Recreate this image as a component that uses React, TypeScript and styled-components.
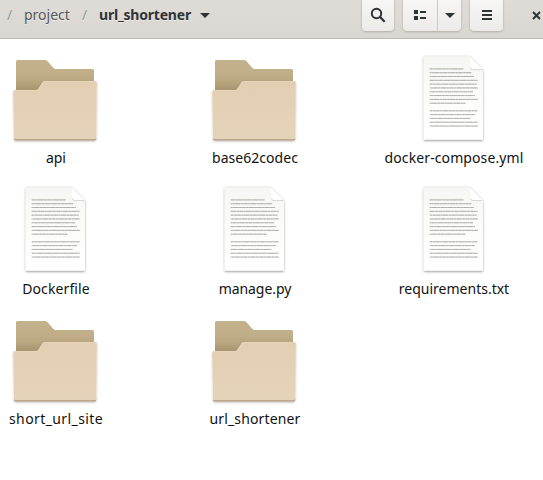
import React from "react";
import styled, { createGlobalStyle } from "styled-components";

const GlobalStyle = createGlobalStyle`
  * { box-sizing: border-box; }
  body {
    margin: 0;
    overflow: hidden;
    background: #fff;
    font-family: "Noto Sans", "Open Sans", sans-serif;
    font-size: 14px;
  }
`;

const Window = styled.main`
  width: 543px;
  height: 480px;
  overflow: hidden;
  background: #fff;
`;

const HeaderBar = styled.header`
  display: flex;
  align-items: flex-start;
  width: 543px;
  height: 39px;
  overflow: hidden;
  background: linear-gradient(#dfdcd8, #dad6d2);
  border-bottom: 1px solid #bfb8b1;
`;

const PathBar = styled.nav`
  display: flex;
  width: 361px;
  padding-left: 7px;
  line-height: 20px;
  padding-top: 5px;
  white-space: nowrap;
  text-shadow: 0 1px rgba(255, 255, 255, 0.5);
`;

const Separator = styled.span<{ $width: number }>`
  width: ${(p) => p.$width}px;
  color: #929595;
`;

const Crumb = styled.span<{ $width: number; $current?: boolean; $spacing: number }>`
  width: ${(p) => p.$width}px;
  color: ${(p) => (p.$current ? "#2e3436" : "#55595a")};
  font-weight: ${(p) => (p.$current ? 700 : 400)};
  letter-spacing: ${(p) => p.$spacing}px;
`;

const PathArrow = styled.svg`
  width: 10px;
  height: 5px;
  margin-top: 8px;
`;

const ButtonGroup = styled.div`
  display: flex;
  height: 35px;
  margin: -3px 7px 0 0;
  border: 1px solid #cdc7c2;
  border-bottom-color: #bfb8b1;
  border-radius: 5px;
  background: linear-gradient(#f8f7f6, #edebe9);
  box-shadow: 0 1px 2px rgba(0, 0, 0, 0.07);
`;

const ToolButton = styled.button<{ $width: number }>`
  display: flex;
  width: ${(p) => p.$width}px;
  padding: 1px 0 0;
  align-items: center;
  justify-content: center;
  border: 0;
  background: none;

  & + & {
    border-left: 1px solid #cdc7c2;
  }
`;

const CloseButton = styled.button`
  display: flex;
  padding: 11px 0 0;
  margin-left: 21px;
  border: 0;
  background: none;
`;

const FileGrid = styled.section`
  display: grid;
  grid-template-columns: repeat(3, 199px);
  grid-template-rows: 131px 130px 130px;
  width: 597px;
  margin-left: -44px;
  padding-top: 11px;
`;

const FileItem = styled.div`
  display: flex;
  flex-direction: column;
  align-items: center;
`;

const FileIcon = styled.svg`
  width: 96px;
  height: 96px;
  flex: none;
  margin-right: 1px;
`;

const FileName = styled.span<{ $spacing: number }>`
  margin: 2px 0 0 1px;
  line-height: 20px;
  color: #111;
  white-space: nowrap;
  letter-spacing: ${(p) => p.$spacing}px;
`;

function FolderIcon() {
  return (
    <FileIcon viewBox="0 0 96 96">
      <defs>
        <linearGradient id="folderBack" x1="0" y1="0" x2="0" y2="1">
          <stop offset="0" stopColor="#c4b28c" />
          <stop offset=".2" stopColor="#c0ae88" />
          <stop offset=".31" stopColor="#b9a67f" />
          <stop offset=".42" stopColor="#a99670" />
        </linearGradient>
        <linearGradient id="folderFront" x1="0" y1="0" x2="0" y2="1">
          <stop offset="0" stopColor="#e3ceb2" />
          <stop offset="1" stopColor="#e5d3b9" />
        </linearGradient>
        <filter id="folderShadow" x="-10%" y="-10%" width="120%" height="125%">
          <feDropShadow dx="0" dy="1" stdDeviation="1.2" floodOpacity=".25" />
        </filter>
      </defs>
      <path d="M9 80V11.5Q9 10 10.5 10H37.5Q39.5 10 40.6 11.2L46.2 17.7Q47.3 19 49 19H85.5Q87 19 87 20.5V80Z" fill="url(#folderBack)" />
      <path
        d="M6.3 41.5Q6.3 40 7.8 40H28.8Q30.4 40 31.2 38.8L35.4 32.3Q36.2 31 37.8 31H88.3Q89.8 31 89.8 32.5L89.3 88.7Q89.3 90.5 87.5 90.5H8.6Q7 90.5 7 88.7Z"
        fill="url(#folderFront)"
        filter="url(#folderShadow)"
      />
      <path d="M7 87.7V88.7Q7 90.5 8.6 90.5H87.5Q89.3 90.5 89.3 88.7V87.7Q89.3 89.2 87.5 89.2H8.6Q7 89.2 7 87.7Z" fill="#ae9a80" />
      <path d="M7 40.4H29.5Q31 40.4 31.8 39L35.9 32.6Q36.5 31.5 38 31.5H89" fill="none" stroke="#ead8c0" strokeWidth=".7" />
    </FileIcon>
  );
}

const TEXT_LINE_ENDS = [58.5, 66.5, 69, 72.7, 71.5, 72.7, 68, 70, 72.7, 60.5, 0, 72.5, 70, 65.5, 72.7, 72.7];

function DocumentIcon() {
  return (
    <FileIcon viewBox="0 0 96 96">
      <defs>
        <linearGradient id="paper" x1="0" y1="0" x2="0" y2="1">
          <stop offset="0" stopColor="#f6f6f5" />
          <stop offset=".55" stopColor="#fcfcfb" />
          <stop offset="1" stopColor="#ffffff" />
        </linearGradient>
        <filter id="paperShadow" x="-10%" y="-10%" width="120%" height="120%">
          <feDropShadow dx="0" dy=".5" stdDeviation="1" floodOpacity=".4" />
        </filter>
      </defs>
      <path d="M19.5 6.5H64.5L78 20V89.2Q78 90.2 77 90.2H19.8Q18.7 90.2 18.7 89.2V7.4Q18.7 6.5 19.5 6.5Z" fill="url(#paper)" filter="url(#paperShadow)" />
      <path d="M19.3 90.3H77.4" stroke="#aaa" strokeWidth=".8" />
      <path d="M65 7L77.7 19.4H67.5Q65.5 19.4 65.5 17.4Z" fill="#fff" />
      <path d="M65.6 17.4Q65.6 19.6 67.8 19.6H77.5" fill="none" stroke="#ccc" strokeWidth=".8" />
      {TEXT_LINE_ENDS.map((end, i) =>
        end ? (
          <g key={i} stroke={i === 0 ? "#98a28e" : "#9c9c9c"} strokeWidth=".95">
            <path d={`M24.7 ${18.9 + i * 3.81}H${end}`} opacity=".55" />
            <path
              d={`M24.7 ${18.9 + i * 3.81}H${end}`}
              opacity=".6"
              strokeDasharray="3.6 .7 1.8 .6 5.2 .8 2.5 .6"
              strokeDashoffset={i * 2.3}
            />
          </g>
        ) : null
      )}
    </FileIcon>
  );
}

type Entry = { name: string; folder?: boolean; spacing: number };

const ENTRIES: Entry[] = [
  { name: "api", folder: true, spacing: -0.1 },
  { name: "base62codec", folder: true, spacing: 0.03 },
  { name: "docker-compose.yml", spacing: 0.1 },
  { name: "Dockerfile", spacing: 0.12 },
  { name: "manage.py", spacing: -0.05 },
  { name: "requirements.txt", spacing: 0 },
  { name: "short_url_site", folder: true, spacing: 0.4 },
  { name: "url_shortener", folder: true, spacing: 0.15 },
];

export default function App() {
  return (
    <Window>
      <GlobalStyle />
      <HeaderBar>
        <PathBar>
          <Separator $width={17}>/</Separator>
          <Crumb $width={58} $spacing={0}>project</Crumb>
          <Separator $width={17}>/</Separator>
          <Crumb $width={101} $current $spacing={-0.2}>url_shortener</Crumb>
          <PathArrow viewBox="0 0 10 5">
            <path d="M0 0H10L5 5Z" fill="#2e3436" />
          </PathArrow>
        </PathBar>
        <ButtonGroup>
          <ToolButton $width={32} aria-label="Search">
            <svg width="16" height="16" viewBox="0 0 16 16" fill="none" stroke="#2e3436">
              <circle cx="6.5" cy="6.5" r="4.7" strokeWidth="2" />
              <path d="M10 10L14.7 14.7" strokeWidth="2.3" />
            </svg>
          </ToolButton>
        </ButtonGroup>
        <ButtonGroup>
          <ToolButton $width={34} aria-label="List view">
            <svg width="14" height="12" viewBox="0 0 14 12" fill="#2e3436">
              <path d="M1 1H5V5H1ZM1 7H5V11H1ZM7 2H13V4H7ZM7 8H13V10H7Z" />
            </svg>
          </ToolButton>
          <ToolButton $width={24} aria-label="View options">
            <svg width="10" height="5" viewBox="0 0 10 5">
              <path d="M0 0H10L5 5Z" fill="#2e3436" />
            </svg>
          </ToolButton>
        </ButtonGroup>
        <ButtonGroup>
          <ToolButton $width={33} aria-label="Menu">
            <svg width="10" height="10" viewBox="0 0 10 10" fill="#2e3436">
              <path d="M0 0H10V2H0ZM0 4H10V6H0ZM0 8H10V10H0Z" />
            </svg>
          </ToolButton>
        </ButtonGroup>
        <CloseButton aria-label="Close">
          <svg width="9" height="9" viewBox="0 0 9 9">
            <path d="M1 1L8 8M8 1L1 8" stroke="#2e3436" strokeWidth="2" />
          </svg>
        </CloseButton>
      </HeaderBar>
      <FileGrid>
        {ENTRIES.map((entry) => (
          <FileItem key={entry.name}>
            {entry.folder ? <FolderIcon /> : <DocumentIcon />}
            <FileName $spacing={entry.spacing}>{entry.name}</FileName>
          </FileItem>
        ))}
      </FileGrid>
    </Window>
  );
}
